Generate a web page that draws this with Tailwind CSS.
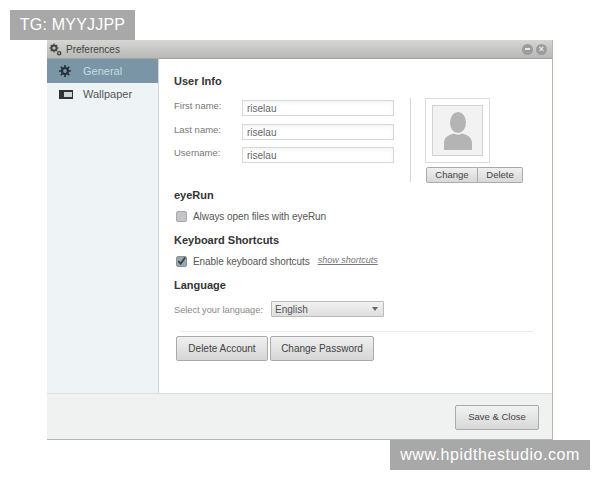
<!DOCTYPE html>
<html lang="en">
<head>
<meta charset="UTF-8">
<title>Preferences</title>
<script src="https://cdn.jsdelivr.net/npm/@tailwindcss/browser@4"></script>
</head>
<body class="bg-white font-['Liberation_Sans',sans-serif] w-[600px] h-[480px] overflow-hidden">
  <div class="pt-[10px] pl-[10px]">
    <div class="w-[125px] h-[30px] bg-[#a8a8a8] text-white text-[16px] tracking-[0.2px] flex items-center justify-center">TG: MYYJJPP</div>
  </div>
  <div class="ml-[47px] w-[506px] h-[400px] flex flex-col border-r border-b border-[#b4b8a8]">
    <div class="h-[19px] shrink-0 bg-gradient-to-b from-[#d6d6d4] to-[#b8b8b6] border-b border-[#a4a4a2] flex items-center pl-[2px] pr-[5px]">
      <svg class="w-[13px] h-[13px] text-[#444]" viewBox="0 0 13 13" fill="none" stroke="currentColor">
        <circle cx="5" cy="5" r="2.6" stroke-width="2"/><path d="M5 0.5v1.5M5 8v1.5M0.5 5H2M8 5h1.5M1.8 1.8l1 1M7.2 7.2l1 1M8.2 1.8l-1 1M2.8 7.2l-1 1" stroke-width="1.2"/>
        <circle cx="10.2" cy="10.2" r="1.6" stroke-width="1.4"/>
      </svg>
      <span class="ml-[4px] text-[10px] text-[#444]">Preferences</span>
      <div class="ml-auto flex gap-[3px]">
        <div class="w-[11px] h-[11px] rounded-full bg-[#9c9c9a] flex items-center justify-center"><div class="w-[5px] h-[2px] bg-[#e8e8e8]"></div></div>
        <div class="w-[11px] h-[11px] rounded-full bg-[#9c9c9a] flex items-center justify-center text-[#eeeeee] text-[9px] leading-none font-bold">×</div>
      </div>
    </div>
    <div class="flex-1 flex min-h-0">
      <div class="w-[112px] shrink-0 bg-[#eef3f6] border-r border-[#d0d6da] text-[11px]">
        <div class="h-[24px] bg-[#7a96a6] flex items-center pl-[12px] gap-[12px] text-[#c8dae4]">
          <svg class="w-[12px] h-[12px] text-[#26323a] shrink-0" viewBox="0 0 12 12" fill="none" stroke="currentColor">
            <circle cx="6" cy="6" r="3" stroke-width="2.2"/><path d="M6 0v2.5M6 9.5V12M0 6h2.5M9.500 6H12M1.800 1.800l1.700 1.700M8.500 8.500l1.700 1.700M10.200 1.800L8.500 3.500M3.500 8.500l-1.700 1.700" stroke-width="1.700"/>
          </svg>
          <span>General</span>
        </div>
        <div class="h-[22px] flex items-center pl-[12px] gap-[10px] text-[#555]">
          <div class="w-[14px] h-[9px] shrink-0 bg-[#333] flex items-center justify-end pr-[1px]"><div class="w-[8px] h-[5px] bg-[#cfd4d6]"></div></div>
          <span>Wallpaper</span>
        </div>
      </div>
      <div class="flex-1 bg-white pl-[15px] pt-[15px] text-[#555] text-[10px]">
        <div class="flex h-[109px]">
          <div class="w-[236px]">
            <h2 class="h-[14px] leading-[14px] text-[11px] font-bold text-[#333]">User Info</h2>
            <div class="mt-[12px] flex flex-col gap-[7.500px]">
              <div class="flex items-center h-[16px]"><span class="w-[68px] pb-[3px] text-[#777] text-[9.500px]">First name:</span><div class="w-[152px] h-[16px] border border-[#d8d8d8] shadow-inner pl-[4px] leading-[15px] text-[#666]">riselau</div></div>
              <div class="flex items-center h-[16px]"><span class="w-[68px] pb-[3px] text-[#777] text-[9.500px]">Last name:</span><div class="w-[152px] h-[16px] border border-[#d8d8d8] shadow-inner pl-[4px] leading-[15px] text-[#666]">riselau</div></div>
              <div class="flex items-center h-[16px]"><span class="w-[68px] pb-[3px] text-[#777] text-[9.500px]">Username:</span><div class="w-[152px] h-[16px] border border-[#d8d8d8] shadow-inner pl-[4px] leading-[15px] text-[#666]">riselau</div></div>
            </div>
          </div>
          <div class="w-px h-[84px] mt-[24px] bg-[#d8d8d8]"></div>
          <div class="ml-[14px] mt-[24px]">
            <div class="w-[65px] h-[65px] border border-[#dcdcdc] p-[6px]">
              <div class="w-full h-full bg-[#f2f2f2] border border-[#d2d2d2] flex items-center justify-center">
                <svg class="w-[28px] h-[38px] text-[#b4b4b4]" viewBox="0 0 28 38" fill="currentColor">
                  <ellipse cx="14" cy="10.500" rx="8" ry="10.500"/>
                  <path d="M0 38V31C0 25 5 23 10 21.500C12 23 16 23 18 21.500C23 23 28 25 28 31V38Z"/>
                </svg>
              </div>
            </div>
            <div class="flex mt-[4px] ml-[1px] text-[9.500px] text-[#444]">
              <div class="w-[52px] h-[16px] flex items-center justify-center border border-[#aaa] rounded-l-[2px] bg-gradient-to-b from-[#f0f0f0] to-[#d8d8d8]">Change</div>
              <div class="w-[45px] h-[16px] flex items-center justify-center border border-l-0 border-[#aaa] rounded-r-[2px] bg-gradient-to-b from-[#f0f0f0] to-[#d8d8d8]">Delete</div>
            </div>
          </div>
        </div>
        <h2 class="mt-[5px] h-[14px] leading-[14px] text-[11px] font-bold text-[#333]">eyeRun</h2>
        <div class="mt-[7px] h-[14px] flex items-center tracking-[-0.07px]">
          <div class="ml-[2px] w-[11px] h-[11px] rounded-[2px] bg-[#c4c4c8] border border-[#a8a8ac]"></div>
          <span class="ml-[6px]">Always open files with eyeRun</span>
        </div>
        <h2 class="mt-[10px] h-[14px] leading-[14px] text-[11px] font-bold text-[#333]">Keyboard Shortcuts</h2>
        <div class="mt-[7px] h-[14px] flex items-center tracking-[-0.07px]">
          <div class="ml-[2px] w-[11px] h-[11px] rounded-[2px] bg-[#9aa6ae] border border-[#8c9298] flex items-center justify-center">
            <svg class="w-[10px] h-[10px] text-[#33444e]" viewBox="0 0 10 10" fill="none" stroke="currentColor" stroke-width="2"><path d="M1.500 5l2.500 3L9 1"/></svg>
          </div>
          <span class="ml-[6px]">Enable keyboard shortcuts</span>
          <span class="ml-[8px] italic underline text-[9px] tracking-normal text-[#777]">show shortcuts</span>
        </div>
        <h2 class="mt-[10px] h-[14px] leading-[14px] text-[11px] font-bold text-[#333]">Language</h2>
        <div class="mt-[9px] h-[16px] flex items-center">
          <span class="w-[97px] pt-[3px] text-[9.200px] text-[#888]">Select your language:</span>
          <div class="w-[113px] h-[16px] border border-[#bbb] rounded-[1px] bg-gradient-to-b from-[#f2f2f2] to-[#dedede] flex items-center pl-[3px] pr-[5px] text-[#555]">
            <span>English</span>
            <div class="ml-auto w-0 h-0 border-x-[3.500px] border-x-transparent border-t-[4px] border-t-[#666]"></div>
          </div>
        </div>
        <div class="mt-[14px] ml-[6px] w-[353px] border-t border-[#ececec]"></div>
        <div class="mt-[4px] ml-[2px] flex gap-[2px] text-[10px] text-[#444]">
          <div class="w-[92px] h-[25px] flex items-center justify-center border border-[#aaa] rounded-[2px] bg-gradient-to-b from-[#f0f0f0] to-[#d6d6d6]">Delete Account</div>
          <div class="w-[104px] h-[25px] flex items-center justify-center border border-[#aaa] rounded-[2px] bg-gradient-to-b from-[#f0f0f0] to-[#d6d6d6]">Change Password</div>
        </div>
      </div>
    </div>
    <div class="h-[46px] shrink-0 bg-[#f0f2f1] border-t border-[#dedede] pt-[1px] flex items-center justify-end pr-[13px]">
      <div class="w-[84px] h-[25px] flex items-center justify-center border border-[#aaa] rounded-[2px] bg-gradient-to-b from-[#f2f2f2] to-[#d8d8d8] text-[9.500px] text-[#444]">Save &amp; Close</div>
    </div>
  </div>
  <div class="ml-[390px] w-[200px] h-[30px] bg-[#a8a8a8] text-white text-[16px] tracking-[0.55px] flex items-center justify-center">www.hpidthestudio.com</div>
</body>
</html>
